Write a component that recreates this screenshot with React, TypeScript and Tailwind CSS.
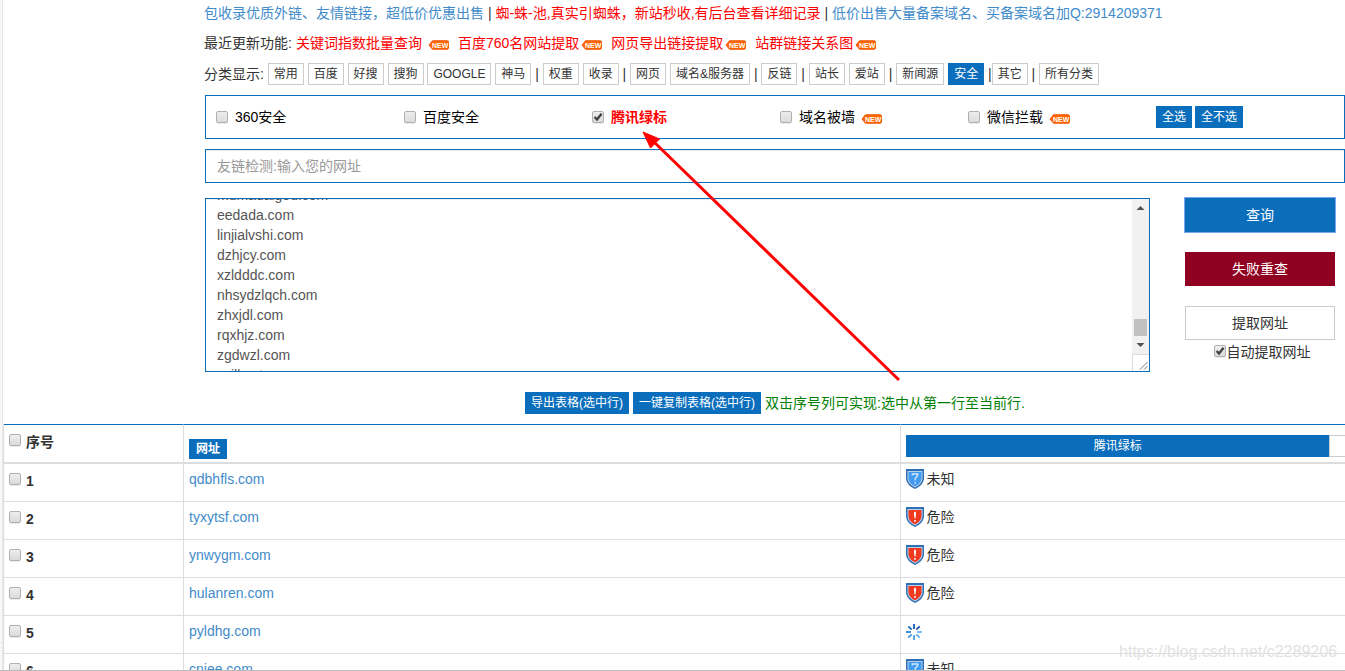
import { useEffect, useRef, useState } from "react"

type Status = "unknown" | "danger" | "loading"

const categories: { name: string; sep?: string }[] = [
  { name: "常用", sep: " " },
  { name: "百度", sep: " " },
  { name: "好搜", sep: " " },
  { name: "搜狗", sep: " " },
  { name: "GOOGLE", sep: " " },
  { name: "神马", sep: " | " },
  { name: "权重", sep: " " },
  { name: "收录", sep: " | " },
  { name: "网页", sep: " " },
  { name: "域名&服务器", sep: " | " },
  { name: "反链", sep: " | " },
  { name: "站长", sep: " " },
  { name: "爱站", sep: " | " },
  { name: "新闻源", sep: " " },
  { name: "安全", sep: " |" },
  { name: "其它", sep: " | " },
  { name: "所有分类" },
]

const filters = [
  { name: "360安全", isNew: false },
  { name: "百度安全", isNew: false },
  { name: "腾讯绿标", isNew: false },
  { name: "域名被墙", isNew: true },
  { name: "微信拦载", isNew: true },
]

const updates = ["关键词指数批量查询", "百度760名网站提取", "网页导出链接提取", "站群链接关系图"]

const domains = [
  "mumadaigou.com",
  "eedada.com",
  "linjialvshi.com",
  "dzhjcy.com",
  "xzldddc.com",
  "nhsydzlqch.com",
  "zhxjdl.com",
  "rqxhjz.com",
  "zgdwzl.com",
  "ccjlbxyt.com",
  "qdbhfls.com",
  "tyxytsf.com",
]

const rows: { id: number; domain: string; status: Status }[] = [
  { id: 1, domain: "qdbhfls.com", status: "unknown" },
  { id: 2, domain: "tyxytsf.com", status: "danger" },
  { id: 3, domain: "ynwygm.com", status: "danger" },
  { id: 4, domain: "hulanren.com", status: "danger" },
  { id: 5, domain: "pyldhg.com", status: "loading" },
  { id: 6, domain: "cnjee.com", status: "unknown" },
]

const checkbox =
  "h-3 w-3 shrink-0 appearance-none rounded-[2px] border border-[#b0b0b0] bg-linear-to-b from-[#eeeeee] to-[#dadada] shadow-[0_1px_0_#ececec]"

function Check(props: {
  id?: string
  label?: string
  checked?: boolean
  onChange?: () => void
}) {
  return (
    <span className="relative mr-px inline-flex shrink-0">
      <input
        id={props.id}
        type="checkbox"
        aria-label={props.label}
        checked={props.checked}
        onChange={props.onChange}
        className={checkbox}
      />
      {props.checked && (
        <svg className="pointer-events-none absolute inset-0" width="12" height="12" viewBox="0 0 12 12">
          <path d="M2.600 6 5 8.500 9.600 2.800" fill="none" stroke="#404040" strokeWidth="2.300" />
        </svg>
      )}
    </span>
  )
}

function NewTag() {
  return (
    <svg width="21" height="10" viewBox="0 0 21 10" className="shrink-0">
      <path
        d="M1 5 3.500 2Q4 .8 5 .8H19Q20.400.8 20.400 2V8Q20.400 9.200 19 9.200H5Q4 9.200 3.500 8Z"
        fill="#ff6a00"
        stroke="#f04e00"
      />
      <text x="4" y="8" fontSize="7" fontWeight="bold" fontFamily="Liberation Sans, sans-serif" fill="#fff">
        NEW
      </text>
    </svg>
  )
}

function Shield({ danger }: { danger: boolean }) {
  return (
    <svg width="18" height="20" viewBox="0 0 18 20" className="shrink-0">
      <path d="M0 0H18V10Q17 16.500 9 20Q1 16.500 0 10Z" fill="#2f6fb5" />
      <path d="M1.500 2H16.500V10Q15.500 15.500 9 18.500Q2.500 15.500 1.500 10Z" fill="#b9d0ea" />
      <path
        d="M2.500 3H15.500V10Q14.500 14.800 9 17.300Q3.500 14.800 2.500 10Z"
        fill={danger ? "#f0391f" : "#419bf0"}
      />
      {danger ? (
        <path d="M9 4.500Q10.300 4.500 10 7L9.500 11.500H8.500L8 7Q7.700 4.500 9 4.500ZM8.200 13H9.800V14.700H8.200Z" fill="#fff" />
      ) : (
        <path
          d="M6.300 6.500V5H11.700V6.500L9.200 9.500V11.500M9.200 13V14.800"
          fill="none"
          stroke="#d5e8fb"
          strokeWidth="1.300"
        />
      )}
    </svg>
  )
}

function Spinner() {
  return (
    <svg width="16" height="16" viewBox="0 0 16 16" fill="none" strokeWidth="1.800">
      <path d="M8 0V5" stroke="#1459b5" />
      <path d="M13.700 2.300 10.300 5.700" stroke="#1b4fae" />
      <path d="M16 8H11" stroke="#6cb5f5" />
      <path d="M13.700 13.700 10.300 10.300" stroke="#62aff3" />
      <path d="M8 16V11" stroke="#4fa0ec" />
      <path d="M2.300 13.700 5.700 10.300" stroke="#3d92e6" />
      <path d="M0 8H5" stroke="#2b7fd8" />
      <path d="M2.300 2.300 5.700 5.700" stroke="#1d6cc8" />
    </svg>
  )
}

function StatusCell({ status }: { status: Status }) {
  if (status === "loading") {
    return (
      <div className="pt-[3px]">
        <Spinner />
      </div>
    )
  }
  return (
    <div className="flex items-center">
      <Shield danger={status === "danger"} />
      <span className="ml-0.5">{status === "danger" ? "危险" : "未知"}</span>
    </div>
  )
}

export default function App() {
  const [category, setCategory] = useState("安全")
  const [checked, setChecked] = useState<string[]>(["腾讯绿标"])
  const [selected, setSelected] = useState<number[]>([])
  const [autoExtract, setAutoExtract] = useState(true)
  const [text, setText] = useState(domains.join("\n"))
  const listRef = useRef<HTMLTextAreaElement>(null)

  // Skip past the first line of the list
  useEffect(() => {
    if (listRef.current) listRef.current.scrollTop = 20
  }, [])

  const toggleFilter = (name: string) =>
    setChecked(checked.includes(name) ? checked.filter((c) => c !== name) : [...checked, name])

  const toggleRow = (id: number) =>
    setSelected(selected.includes(id) ? selected.filter((s) => s !== id) : [...selected, id])

  return (
    <div className="relative flex h-screen overflow-hidden border-b border-[#bbb] bg-white font-['Liberation_Sans','Noto_Sans_CJK_SC',sans-serif] text-sm leading-5 text-[#333]">
      <aside className="flex w-[3px] shrink-0 flex-col justify-end border-r border-[#e7e7e7] bg-[#f8f8f8]">
        <div className="h-7 border-t border-[#e7e7e7]" />
      </aside>

      <main className="min-w-0 flex-1">
        <div className="ml-[202px]">
          <div className="-ml-px">
            <p className="pt-[3px] whitespace-nowrap">
              <a href="#" className="text-[#428bca]">包收录优质外链、友情链接，超低价优惠出售</a>
              {" | "}
              <a href="#" className="text-[#f00]">蜘-蛛-池,真实引蜘蛛，新站秒收,有后台查看详细记录</a>
              {" | "}
              <a href="#" className="text-[#428bca]">低价出售大量备案域名、买备案域名加Q:2914209371</a>
            </p>

            <div className="mt-2.5 flex items-center gap-2">
              <span className="-mr-1">最近更新功能:</span>
              {updates.map((item, i) => (
                <a key={item} href="#" className="flex items-center text-[#f00]">
                  <span className={i === 0 ? "mr-1.5" : "mr-0.5"}>{item}</span>
                  <span className="mr-px flex pt-[3px]">
                    <NewTag />
                  </span>
                </a>
              ))}
            </div>

            <div className="mt-2.5 leading-[22px] whitespace-nowrap">
              分类显示:{" "}
              {categories.map((item) => (
                <span key={item.name}>
                  <button
                    onClick={() => setCategory(item.name)}
                    className={`h-[22px] border px-[5px] align-top text-xs ${
                      category === item.name ? "border-[#0a6ebd] bg-[#0a6ebd] text-white" : "border-[#ccc] bg-white"
                    }`}
                  >
                    {item.name}
                  </button>
                  {item.sep}
                </span>
              ))}
            </div>
          </div>

          <div className="mt-2.5 grid h-11 grid-cols-6 items-center border border-[#0a6ebd] pl-2.5 text-black">
            {filters.map((item) => (
              <label key={item.name} className="flex items-center">
                <Check checked={checked.includes(item.name)} onChange={() => toggleFilter(item.name)} />
                <span className={`ml-1.5 ${checked.includes(item.name) ? "font-bold text-[#f00]" : ""}`}>
                  {item.name}
                </span>
                {item.isNew && (
                  <span className="ml-1.5 flex pt-[3px]">
                    <NewTag />
                  </span>
                )}
              </label>
            ))}
            <div className="flex gap-[3px] text-xs text-white">
              <button
                className="h-[22px] bg-[#0a6ebd] px-1.5"
                onClick={() => setChecked(filters.map((f) => f.name))}
              >
                全选
              </button>
              <button className="h-[22px] bg-[#0a6ebd] px-1.5" onClick={() => setChecked([])}>
                全不选
              </button>
            </div>
          </div>

          <input
            type="text"
            aria-label="友链检测"
            placeholder="友链检测:输入您的网址"
            className="mt-2.5 block h-[34px] w-full border border-[#0a6ebd] px-[11px] shadow-[inset_0_1px_1px_rgba(0,0,0,0.075)] outline-none placeholder:text-[#999]"
          />

          <div className="mt-[15px] mr-2.5 flex gap-[35px]">
            <div className="flex h-[174px] min-w-0 flex-1 border border-[#0a6ebd]">
              <textarea
                ref={listRef}
                aria-label="网址列表"
                value={text}
                onChange={(e) => setText(e.target.value)}
                className="min-w-0 flex-1 resize-none overflow-hidden px-[11px] py-1.5 text-[#555] shadow-[inset_0_1px_1px_rgba(0,0,0,0.075)] outline-none"
              />
              {/* Scrollbar */}
              <div className="flex w-[17px] shrink-0 flex-col items-center bg-[#f1f1f1]">
                <svg width="17" height="17" viewBox="0 0 17 17">
                  <path d="M4.500 11 8.500 7 12.500 11Z" fill="#505050" />
                </svg>
                <div className="flex-1" />
                <div className="h-[17px] w-[13px] bg-[#c1c1c1]" />
                <svg width="17" height="18" viewBox="0 0 17 18">
                  <path d="M4.500 7 8.500 11 12.500 7Z" fill="#505050" />
                </svg>
                <svg width="17" height="17" viewBox="0 0 17 17">
                  <path d="M0 0H17V17H0Z" fill="#fff" />
                  <path d="M.5 17V.5H17" fill="none" stroke="#dcdcdc" />
                  <path d="M8 15.500 15.500 8M12 15.500 15.500 12" stroke="#777" />
                </svg>
              </div>
            </div>

            <div className="w-[150px] shrink-0">
              <button className="block h-[34px] w-full bg-[#0a6ebd] text-white outline outline-[#76a7ec]">查询</button>
              <button className="mt-5 block h-[34px] w-full bg-[#900021] text-white">失败重查</button>
              <button className="mt-5 block h-[34px] w-full border border-[#ccc] bg-white">提取网址</button>
              <label className="mt-0.5 ml-1 flex items-start justify-center">
                <span className="flex pt-[3px]">
                  <Check checked={autoExtract} onChange={() => setAutoExtract(!autoExtract)} />
                </span>
                自动提取网址
              </label>
            </div>
          </div>

          <div className="mt-5 flex items-center justify-center gap-1 text-[#008000]">
            <button className="h-[22px] bg-[#0a6ebd] px-1.5 text-xs text-white">导出表格(选中行)</button>
            <button className="h-[22px] bg-[#0a6ebd] px-1.5 text-xs text-white">一键复制表格(选中行)</button>
            <span>双击序号列可实现:选中从第一行至当前行.</span>
          </div>
        </div>

        <table className="mt-2.5 w-full table-fixed border-separate border-spacing-0 border-l border-[#ddd] text-left">
          <thead>
            <tr className="h-10">
              <th className="w-[179px] border-t border-b-2 border-t-[#0a6ebd] border-b-[#ddd] pl-[5px] align-top">
                <div className="mt-[7px] flex items-start">
                  <span className="flex pt-0.5">
                    <Check
                      label="全部"
                      checked={selected.length === rows.length}
                      onChange={() => setSelected(selected.length === rows.length ? [] : rows.map((r) => r.id))}
                    />
                  </span>
                  <span className="ml-1">序号</span>
                </div>
              </th>
              <th className="w-[53.5%] border-t border-b-2 border-l border-t-[#0a6ebd] border-b-[#ddd] border-l-[#ddd] px-[5px] align-bottom">
                <button className="mb-[3px] block h-5 bg-[#0a6ebd] px-[7px] text-xs font-bold text-white">网址</button>
              </th>
              <th className="border-t border-b-2 border-l border-t-[#0a6ebd] border-b-[#ddd] border-l-[#ddd] pl-[5px] align-bottom font-normal">
                <div className="mb-[5px] flex text-xs">
                  <button className="h-[22px] flex-1 bg-[#0a6ebd] text-white">腾讯绿标</button>
                  <button aria-label="更多" className="h-[22px] w-4 border border-r-0 border-[#ccc] bg-white" />
                </div>
              </th>
            </tr>
          </thead>
          <tbody>
            {rows.map((row) => (
              <tr key={row.id} className="h-[38px] align-top">
                <td className="border-b border-[#ddd] pt-[7px] pl-[5px] font-bold">
                  <label className="flex items-start">
                    <span className="flex pt-0.5">
                      <Check checked={selected.includes(row.id)} onChange={() => toggleRow(row.id)} />
                    </span>
                    <span className="ml-1">{row.id}</span>
                  </label>
                </td>
                <td className="border-b border-l border-[#ddd] px-[5px] pt-[5px]">
                  <a href="#" className="text-[#428bca]">{row.domain}</a>
                </td>
                <td className="border-b border-l border-[#ddd] px-[5px] pt-[5px]">
                  <StatusCell status={row.status} />
                </td>
              </tr>
            ))}
          </tbody>
        </table>
      </main>

      {/* Arrow pointing at the active filter */}
      <svg className="pointer-events-none absolute top-[130px] left-[640px]" width="262" height="254" viewBox="0 0 262 254">
        <path d="M12 10 259 250" stroke="#f00" strokeWidth="3" />
        <path d="M3 2 19.500 9 10.500 18Z" fill="#f00" stroke="#f00" strokeLinejoin="round" />
      </svg>
      <span className="pointer-events-none absolute right-2 bottom-1.5 text-base text-[#e2e2e2]">
        https://blog.csdn.net/c2289206
      </span>
    </div>
  )
}
